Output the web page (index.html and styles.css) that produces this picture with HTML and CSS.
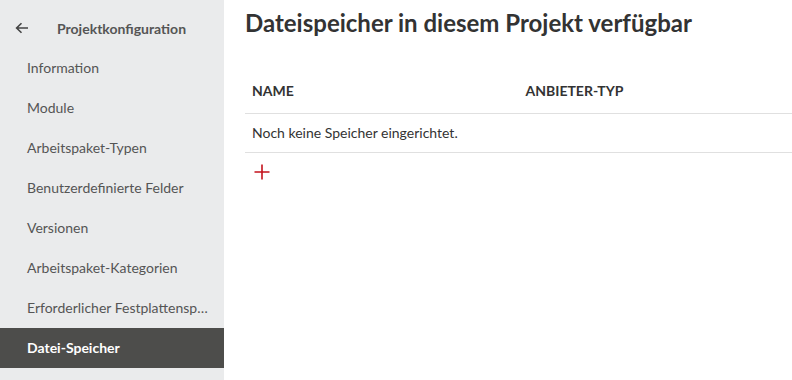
FILE: index.html
```html
<!DOCTYPE html>
<html lang="de">
<head>
    <meta charset="UTF-8">
    <title>Datei-Speicher</title>
    <link rel="stylesheet" href="styles.css">
</head>
<body>
    <div class="layout">
        <nav class="sidebar">
            <div class="sidebar-head">
                <svg class="back-icon" width="14" height="12" viewBox="0 0 14 12">
                    <path d="M13 6H2M6.5 1.2L1.6 6l4.9 4.8" fill="none" stroke="#444" stroke-width="1.6"/>
                </svg>
                <span>Projektkonfiguration</span>
            </div>
            <a class="menu-item">Information</a>
            <a class="menu-item">Module</a>
            <a class="menu-item">Arbeitspaket-Typen</a>
            <a class="menu-item">Benutzerdefinierte Felder</a>
            <a class="menu-item">Versionen</a>
            <a class="menu-item">Arbeitspaket-Kategorien</a>
            <a class="menu-item">Erforderlicher Festplattenspeicher</a>
            <a class="menu-item active">Datei-Speicher</a>
        </nav>
        <main class="content">
            <h1>Dateispeicher in diesem Projekt verfügbar</h1>
            <table class="storage-table">
                <thead>
                    <tr>
                        <th>Name</th>
                        <th>Anbieter-Typ</th>
                    </tr>
                </thead>
                <tbody>
                    <tr>
                        <td colspan="2">Noch keine Speicher eingerichtet.</td>
                    </tr>
                </tbody>
            </table>
            <a class="add-link" title="Hinzufügen">
                <svg width="16" height="16" viewBox="0 0 16 16">
                    <path d="M8 0.5V15.5M0.5 8H15.5" stroke="#c4121c" stroke-width="1.6"/>
                </svg>
            </a>
        </main>
    </div>
</body>
</html>
```

FILE: styles.css
```css
body {
    margin: 0;
    font-family: Lato, "Open Sans", sans-serif;
    color: #333;
    background: white;
}
.layout {
    display: flex;
    height: 380px;
}
.sidebar {
    width: 224px;
    flex-shrink: 0;
    background: #eaebec;
    display: flex;
    flex-direction: column;
}
.sidebar-head {
    height: 40px;
    padding: 8px 0 0 15px;
    display: flex;
    align-items: center;
    font-size: 14px;
    font-weight: bold;
    color: #555;
}
.back-icon {
    margin-right: 28px;
}
.menu-item {
    height: 40px;
    line-height: 40px;
    padding: 0 14px 0 27px;
    font-size: 14px;
    color: #555;
    white-space: nowrap;
    overflow: hidden;
    text-overflow: ellipsis;
}
.menu-item.active {
    background: #4d4d4b;
    color: white;
    font-weight: bold;
}
.content {
    flex: 1;
    padding-left: 21px;
}
h1 {
    margin: 7px 0 0;
    font-size: 24px;
    font-weight: bold;
    color: #333;
    line-height: 32px;
}
.storage-table {
    width: 100%;
    border-collapse: collapse;
    margin-top: 33px;
    font-size: 14px;
}
.storage-table th {
    width: 50%;
    text-align: left;
    text-transform: uppercase;
    font-weight: bold;
    padding: 10px 7px 14px;
    border-bottom: 1px solid #e0e0e0;
}
.storage-table td {
    padding: 10px 7px 11px;
    border-bottom: 1px solid #e0e0e0;
}
.add-link {
    display: inline-block;
    margin: 11px 0 0 9px;
    cursor: pointer;
}
```
